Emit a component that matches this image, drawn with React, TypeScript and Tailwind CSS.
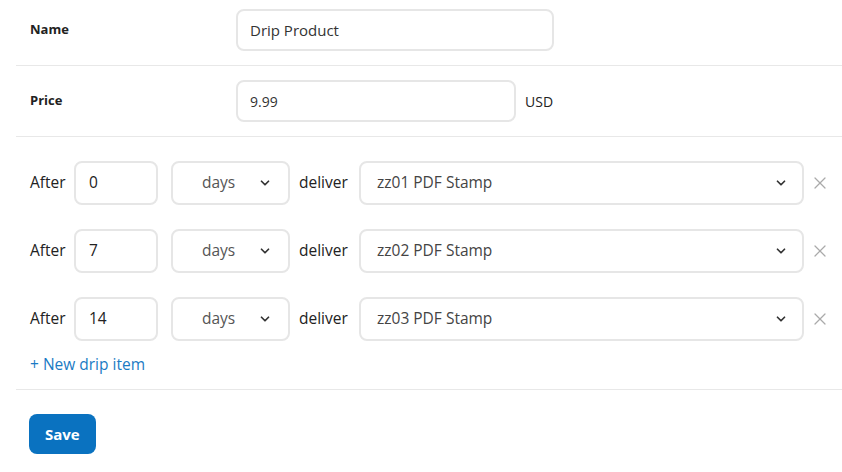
import { ChevronDown, X } from "lucide-react";

const items = [
  { after: "0", product: "zz01 PDF Stamp" },
  { after: "7", product: "zz02 PDF Stamp" },
  { after: "14", product: "zz03 PDF Stamp" },
];

const font = { fontFamily: '"Open Sans", "Liberation Sans", sans-serif' };

function DripRow({ after, product }: { after: string; product: string }) {
  return (
    <div className="flex items-center text-[15.5px] text-[#222]">
      <span className="w-[44px]">After</span>
      <div className="flex h-[44px] w-[84px] items-center rounded-lg border-2 border-[#e6e6e6] pl-[13px] text-[#222]">
        {after}
      </div>
      <div className="ml-[13px] flex h-[44px] w-[119px] items-center justify-between rounded-lg border-2 border-[#e6e6e6] pl-[29px] pr-[16px] text-[#555]">
        <span>days</span>
        <ChevronDown size={14} strokeWidth={3} className="text-[#333]" />
      </div>
      <span className="ml-[9px] w-[60px]">deliver</span>
      <div className="flex h-[44px] w-[445px] items-center justify-between rounded-lg border-2 border-[#e6e6e6] pl-[16px] pr-[14px] text-[#444]">
        <span>{product}</span>
        <ChevronDown size={14} strokeWidth={3} className="text-[#333]" />
      </div>
      <X size={20} strokeWidth={1.5} className="ml-[6px] text-[#aaa]" />
    </div>
  );
}

export default function App() {
  return (
    <div className="min-h-[472px] bg-white pl-4" style={font}>
      <div className="flex items-center border-b border-[#e8e8e8] pb-[14px] pl-[14px] pt-[9px]">
        <span className="w-[206px] text-[13px] font-bold text-[#222]">Name</span>
        <div className="flex h-[42px] w-[318px] items-center rounded-lg border-2 border-[#e6e6e6] pl-[12px] text-[15px] text-[#333]">
          Drip Product
        </div>
      </div>
      <div className="flex items-center border-b border-[#e8e8e8] py-[14px] pl-[14px]">
        <span className="w-[206px] text-[13px] font-bold text-[#222]">Price</span>
        <div className="flex h-[42px] w-[280px] items-center rounded-lg border-2 border-[#e6e6e6] pl-[12px] text-[14px] text-[#333]">
          9.99
        </div>
        <span className="ml-[9px] text-[14px] text-[#222]">USD</span>
      </div>
      <div className="flex flex-col border-b border-[#e8e8e8] pb-[14px] pl-[14px] pt-[24px]">
        <div className="flex flex-col gap-[24px]">
          {items.map((it) => (
            <DripRow key={it.product} {...it} />
          ))}
        </div>
        <a className="mt-[12px] h-[22px] text-[15.5px] text-[#1a7bc4]">+ New drip item</a>
      </div>
      <div className="pl-[13px] pt-[24px]">
        <button className="h-[40px] rounded-lg bg-[#0a72c0] px-[16px] text-[15px] font-bold text-white">
          Save
        </button>
      </div>
    </div>
  );
}
